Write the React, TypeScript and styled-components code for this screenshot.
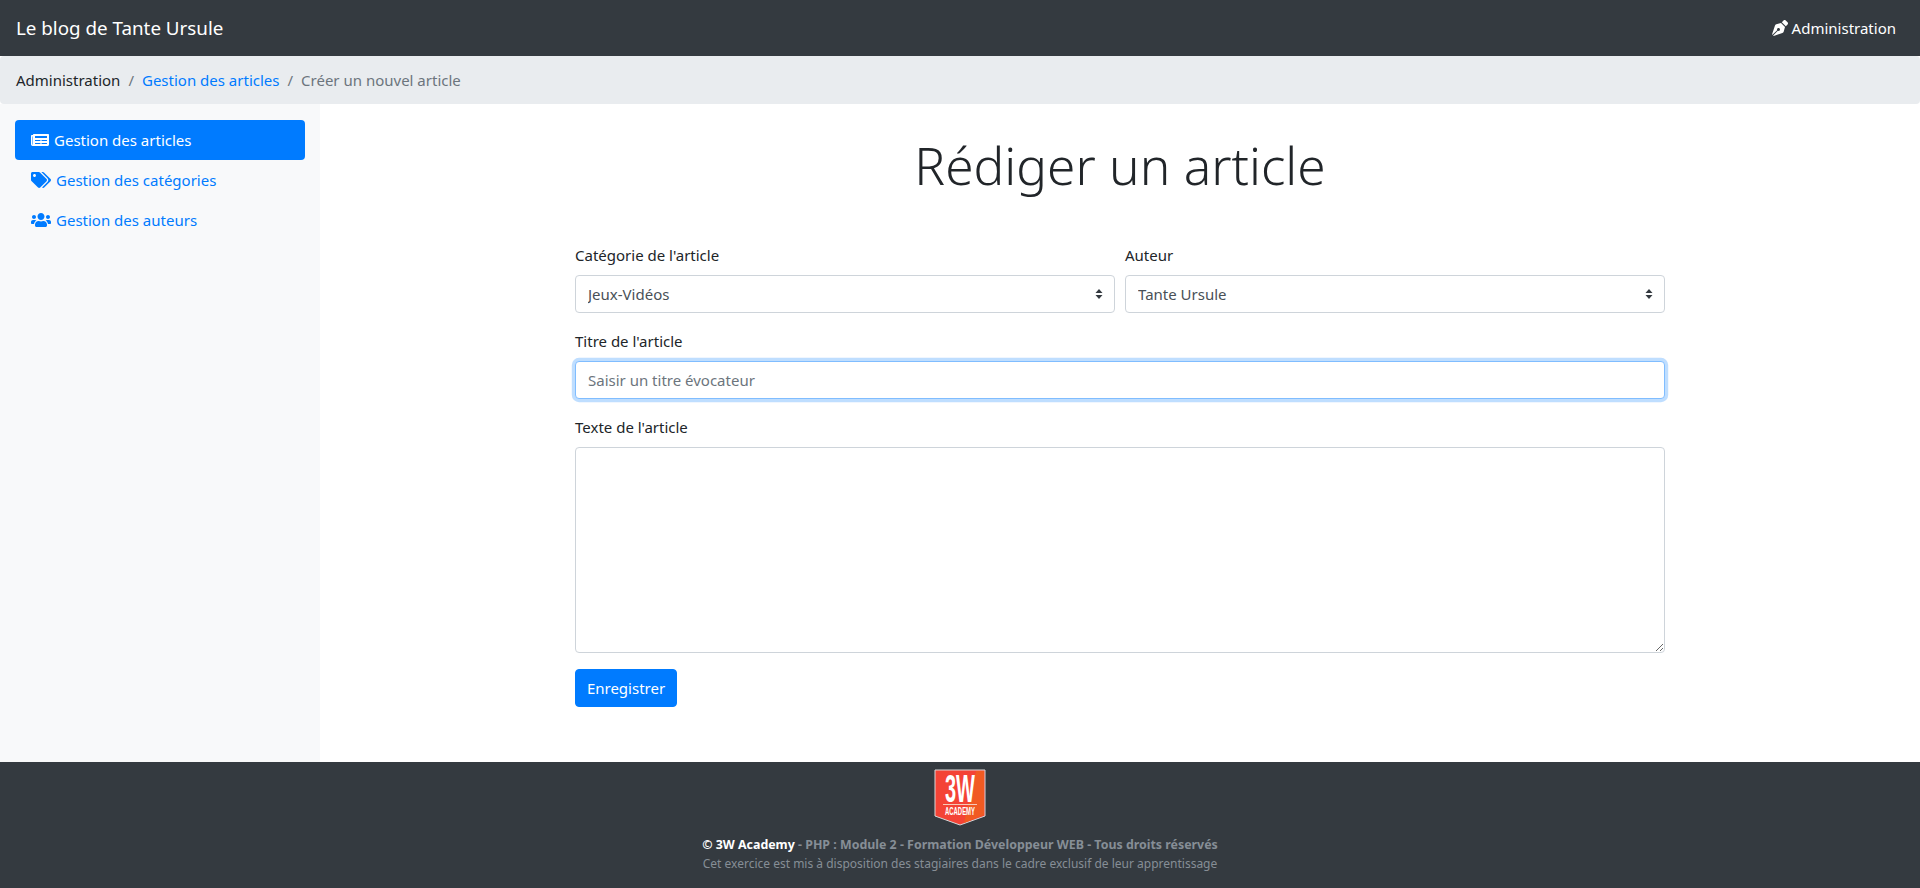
import React from 'react'
import styled, { createGlobalStyle } from 'styled-components'
import { FaNewspaper, FaTags, FaUsers, FaPenNib } from 'react-icons/fa'

const GlobalStyle = createGlobalStyle`
    * {
        box-sizing: border-box;
    }

    body {
        margin: 0;
        background: #fff;
        color: #212529;
        font-family: "Noto Sans", "Open Sans", sans-serif;
        font-size: 15px;
        line-height: 24px;
    }
`

const Page = styled.div`
    display: flex;
    flex-direction: column;
    min-height: 888px;
`

const TopBar = styled.nav`
    height: 56px;
    flex: none;
    background: #343a40;
    color: #fff;
    display: flex;
    align-items: center;
    justify-content: space-between;
    padding: 0 24px 0 16px;
`

const Brand = styled.a`
    font-size: 18.8px;
    color: #fff;
`

const AdminLink = styled.a`
    display: flex;
    align-items: center;
    gap: 4px;
    color: #fff;

    & > svg {
        width: 16px;
        height: 16px;
    }
`

const Breadcrumb = styled.ol`
    height: 48px;
    flex: none;
    margin: 0;
    padding: 12px 16px;
    list-style: none;
    display: flex;
    background: #e9ecef;
    border-radius: 4px;
`

const Crumb = styled.li<{ $tone: 'dark' | 'link' | 'muted' }>`
    color: ${p => (p.$tone === 'link' ? '#007bff' : p.$tone === 'muted' ? '#6c757d' : '#212529')};

    &:not(:first-child)::before {
        content: '/';
        color: #6c757d;
        padding: 0 8px;
    }
`

const Body = styled.div`
    flex: 1;
    display: flex;
`

const Sidebar = styled.aside`
    width: 320px;
    flex: none;
    background: #f8f9fa;
    padding: 16px 15px;
`

const NavLink = styled.a<{ $active?: boolean; $iconWidth: number }>`
    display: flex;
    align-items: center;
    gap: 5px;
    height: 40px;
    padding: 0 16px;
    border-radius: 4px;
    color: ${p => (p.$active ? '#fff' : '#007bff')};
    background: ${p => (p.$active ? '#007bff' : 'transparent')};

    & > svg {
        height: 16px;
        width: ${p => p.$iconWidth}px;
        flex: none;
    }
`

const Main = styled.main`
    flex: 1;
    padding: 28px 255px 0;
`

const Title = styled.h1`
    margin: 0 0 44px;
    font-size: 51.4px;
    font-weight: 300;
    line-height: 67px;
    text-align: center;
`

const Row = styled.div`
    display: grid;
    grid-template-columns: 1fr 1fr;
    gap: 10px;
`

const Group = styled.div`
    margin-bottom: 16px;
`

const Label = styled.label`
    display: block;
    margin-bottom: 8px;
`

const SelectWrap = styled.div`
    position: relative;
`

const Select = styled.select`
    display: block;
    width: 100%;
    height: 38px;
    padding: 6px 28px 6px 12px;
    border: 1px solid #ced4da;
    border-radius: 4px;
    background: #fff;
    appearance: none;
    color: #495057;
    font: inherit;
`

const Arrows = styled.svg`
    position: absolute;
    right: 12px;
    top: 14px;
    width: 8px;
    height: 10px;
    pointer-events: none;
`

const TextInput = styled.input`
    display: block;
    width: 100%;
    height: 38px;
    padding: 6px 12px;
    border: 1px solid #80bdff;
    border-radius: 4px;
    box-shadow: 0 0 0 3.2px rgba(0, 123, 255, 0.25);
    outline: none;
    color: #495057;
    font: inherit;

    &::placeholder {
        color: #6c757d;
        opacity: 1;
    }
`

const TextArea = styled.textarea`
    display: block;
    width: 100%;
    height: 206px;
    padding: 6px 12px;
    border: 1px solid #ced4da;
    border-radius: 4px;
    color: #495057;
    font: inherit;
`

const SaveButton = styled.button`
    display: block;
    width: 102px;
    height: 38px;
    padding: 0;
    border: 1px solid #007bff;
    border-radius: 4px;
    background: #007bff;
    color: #fff;
    font: inherit;
`

const Footer = styled.footer`
    height: 126px;
    flex: none;
    background: #343a40;
    padding-top: 7px;
    text-align: center;
`

const Logo = styled.svg`
    display: block;
    width: 52px;
    height: 58px;
    margin: 0 auto 8px;
`

const Rights = styled.div`
    font-size: 12.4px;
    line-height: 19px;
    font-weight: 700;
    color: #868e96;
`

const RightsOwner = styled.span`
    color: #fff;
`

const Notice = styled.div`
    font-size: 12px;
    line-height: 19px;
    color: #868e96;
`

const SelectField = ({ value }: { value: string }) => (
    <SelectWrap>
        <Select defaultValue={value}>
            <option>{value}</option>
        </Select>
        <Arrows viewBox="0 0 8 10">
            <path d="M4 0 L7.5 4 L0.5 4 Z M4 10 L0.5 6 L7.5 6 Z" fill="#343a40" />
        </Arrows>
    </SelectWrap>
)

const App: React.FC = () => {
    return (
        <Page>
            <GlobalStyle />
            <TopBar>
                <Brand>Le blog de Tante Ursule</Brand>
                <AdminLink>
                    <FaPenNib />
                    Administration
                </AdminLink>
            </TopBar>
            <Breadcrumb>
                <Crumb $tone="dark">Administration</Crumb>
                <Crumb $tone="link">Gestion des articles</Crumb>
                <Crumb $tone="muted">Créer un nouvel article</Crumb>
            </Breadcrumb>
            <Body>
                <Sidebar>
                    <NavLink $active $iconWidth={18}>
                        <FaNewspaper />
                        Gestion des articles
                    </NavLink>
                    <NavLink $iconWidth={20}>
                        <FaTags />
                        Gestion des catégories
                    </NavLink>
                    <NavLink $iconWidth={20}>
                        <FaUsers />
                        Gestion des auteurs
                    </NavLink>
                </Sidebar>
                <Main>
                    <Title>Rédiger un article</Title>
                    <form>
                        <Row>
                            <Group>
                                <Label>Catégorie de l'article</Label>
                                <SelectField value="Jeux-Vidéos" />
                            </Group>
                            <Group>
                                <Label>Auteur</Label>
                                <SelectField value="Tante Ursule" />
                            </Group>
                        </Row>
                        <Group>
                            <Label>Titre de l'article</Label>
                            <TextInput type="text" placeholder="Saisir un titre évocateur" />
                        </Group>
                        <Group>
                            <Label>Texte de l'article</Label>
                            <TextArea />
                        </Group>
                        <SaveButton type="button">Enregistrer</SaveButton>
                    </form>
                </Main>
            </Body>
            <Footer>
                <Logo viewBox="0 0 52 58">
                    <polygon points="1,1 51,1 51,47 26,56 1,47" fill="#f44336" stroke="#d8d8d8" strokeWidth="1" />
                    <polygon points="42,2 50,2 50,46 30,54" fill="#f15a22" />
                    <text x="26" y="33" fill="#fff" fontFamily="Liberation Sans" fontWeight="700" fontSize="38" textAnchor="middle" textLength="30" lengthAdjust="spacingAndGlyphs">3W</text>
                    <rect x="9" y="35" width="34" height="1" fill="#f6c9b8" />
                    <text x="26" y="46" fill="#fff" fontFamily="Liberation Sans" fontWeight="700" fontSize="10.5" textAnchor="middle" textLength="30" lengthAdjust="spacingAndGlyphs">ACADEMY</text>
                </Logo>
                <Rights>
                    <RightsOwner>© 3W Academy</RightsOwner> - PHP : Module 2 - Formation Développeur WEB - Tous droits réservés
                </Rights>
                <Notice>Cet exercice est mis à disposition des stagiaires dans le cadre exclusif de leur apprentissage</Notice>
            </Footer>
        </Page>
    )
}

export default App
